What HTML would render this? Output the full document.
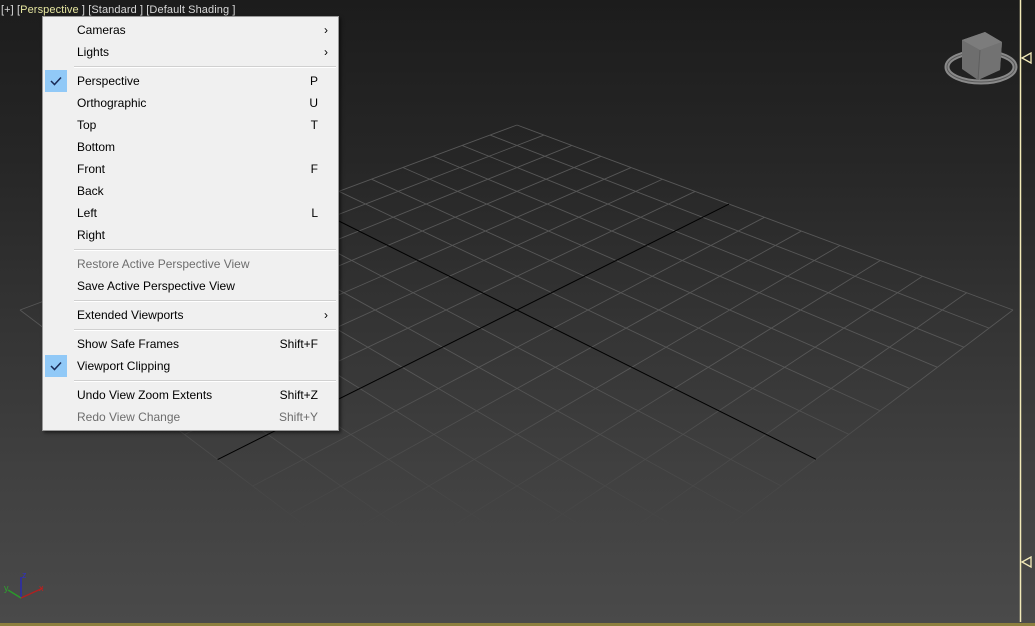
<!DOCTYPE html>
<html><head><meta charset="utf-8"><style>
html,body{margin:0;padding:0;width:1035px;height:626px;overflow:hidden;}
body{position:relative;background:linear-gradient(#1c1c1c 0%,#262626 25%,#333 50%,#404040 75%,#4a4a4a 100%);font-family:"Liberation Sans",sans-serif;}
svg{display:block;}
#hdr{position:absolute;left:1px;top:4px;font-size:11px;color:#d8d8d8;letter-spacing:0.1px;white-space:pre;}
#hdr .y{color:#e6e6a0;}
#menu{position:absolute;left:42px;top:16px;width:297px;height:415px;background:#f0f0f0;border:1px solid #999;box-sizing:border-box;box-shadow:2px 2px 3px rgba(0,0,0,0.5);font-size:12px;color:#000;}
.it{position:absolute;left:0;width:295px;height:22px;line-height:22px;}
.it .t{position:absolute;left:34px;}
.it .k{position:absolute;right:20px;}
.it .a{position:absolute;right:10px;font-size:12px;}
.dis{color:#6d6d6d;}
.sep{position:absolute;left:31px;width:262px;height:1px;background:#d0d0d0;border-bottom:1px solid #fff;}
.chk{position:absolute;left:2px;top:0;width:22px;height:22px;background:#91c9f7;}
</style></head><body>
<svg width="1035" height="626" style="position:absolute;left:0;top:0">
<defs><linearGradient id="fd" x1="0" y1="0" x2="0" y2="626" gradientUnits="userSpaceOnUse">
<stop offset="0" stop-color="#fff"/><stop offset="0.6" stop-color="#fff"/><stop offset="0.86" stop-color="#000"/></linearGradient>
<mask id="m"><rect width="1035" height="626" fill="url(#fd)"/></mask></defs>
<g id="grid" mask="url(#m)" stroke="#575757" stroke-width="0.9" fill="none"></g>
<g id="axes" stroke="#000" stroke-width="1"></g>
<line x1="1020.5" y1="0" x2="1020.5" y2="622" stroke="#f2eab8" stroke-width="1.5"/>
<polygon points="1022,58 1031,53 1031,63" fill="none" stroke="#f2eab8" stroke-width="1.3"/>
<polygon points="1022,562 1031,557 1031,567" fill="none" stroke="#f2eab8" stroke-width="1.3"/>
<rect x="0" y="623" width="1035" height="3" fill="#8c7f3e"/>
<ellipse cx="981" cy="67" rx="34" ry="15" fill="none" stroke="#8a8a8a" stroke-width="5"/>
<ellipse cx="981" cy="67" rx="34" ry="15" fill="none" stroke="#5a5a5a" stroke-width="1"/>
<polygon points="962,40 985,32 1002,42 1000,70 978,80 962,69" fill="#6e6e6e"/>
<polygon points="962,40 985,32 1002,42 980,50" fill="#7c7c7c"/>
<polygon points="980,50 1002,42 1000,70 978,80" fill="#727272"/>
<line x1="980" y1="50" x2="978" y2="80" stroke="#5e5e5e"/>
<line x1="21" y1="598" x2="21" y2="577" stroke="#2a2ab0" stroke-width="1.5"/>
<line x1="21" y1="598" x2="43" y2="588" stroke="#b02020" stroke-width="1.5"/>
<line x1="21" y1="598" x2="8" y2="590" stroke="#2a9a2a" stroke-width="1.5"/>
<text x="22" y="578" font-size="9" fill="#3030c0" font-family="Liberation Sans">z</text>
<text x="39" y="591" font-size="9" fill="#c02020" font-family="Liberation Sans">x</text>
<text x="4" y="591" font-size="9" fill="#30a030" font-family="Liberation Sans">y</text>
</svg>
<script>
(function(){
var P=[[517,125],[1013,310],[517,686],[20,310]];
function H(u,v){
 var x0=P[0][0],y0=P[0][1],x1=P[1][0],y1=P[1][1],x2=P[2][0],y2=P[2][1],x3=P[3][0],y3=P[3][1];
 var dx1=x1-x2,dx2=x3-x2,dy1=y1-y2,dy2=y3-y2,sx=x0-x1+x2-x3,sy=y0-y1+y2-y3;
 var den=dx1*dy2-dx2*dy1;
 var g=(sx*dy2-dx2*sy)/den,h=(dx1*sy-sx*dy1)/den;
 var a=x1-x0+g*x1,b=x3-x0+h*x3,c=x0,d=y1-y0+g*y1,e=y3-y0+h*y3,f=y0;
 var w=g*u+h*v+1;return [(a*u+b*v+c)/w,(d*u+e*v+f)/w];}
var N=14,s='',t='';
for(var i=0;i<=N;i++){var k=i/N;
 var a=H(k,0),b=H(k,1),c=H(0,k),d=H(1,k);
 var l1='<line x1="'+a[0]+'" y1="'+a[1]+'" x2="'+b[0]+'" y2="'+b[1]+'"/>';
 var l2='<line x1="'+c[0]+'" y1="'+c[1]+'" x2="'+d[0]+'" y2="'+d[1]+'"/>';
 if(i==7){t+=l1+l2;}else{s+=l1+l2;}}
document.getElementById('grid').innerHTML=s;
document.getElementById('axes').innerHTML=t;
})();
</script>
<div id="hdr">[+] [<span class="y">Perspective</span> ] [Standard ] [Default Shading ]</div>
<div id="menu">
<div class="it" style="top:2px"><span class="t">Cameras</span><span class="a">›</span></div>
<div class="it" style="top:24px"><span class="t">Lights</span><span class="a">›</span></div>
<div class="sep" style="top:49px"></div>
<div class="it" style="top:53px"><div class="chk"><svg width="22" height="22"><path d="M6 11 L9.5 14.5 L16 7.5" stroke="#1a2a55" stroke-width="1.5" fill="none"/></svg></div><span class="t">Perspective</span><span class="k">P</span></div>
<div class="it" style="top:75px"><span class="t">Orthographic</span><span class="k">U</span></div>
<div class="it" style="top:97px"><span class="t">Top</span><span class="k">T</span></div>
<div class="it" style="top:119px"><span class="t">Bottom</span></div>
<div class="it" style="top:141px"><span class="t">Front</span><span class="k">F</span></div>
<div class="it" style="top:163px"><span class="t">Back</span></div>
<div class="it" style="top:185px"><span class="t">Left</span><span class="k">L</span></div>
<div class="it" style="top:207px"><span class="t">Right</span></div>
<div class="sep" style="top:232px"></div>
<div class="it dis" style="top:236px"><span class="t">Restore Active Perspective View</span></div>
<div class="it" style="top:258px"><span class="t">Save Active Perspective View</span></div>
<div class="sep" style="top:283px"></div>
<div class="it" style="top:287px"><span class="t">Extended Viewports</span><span class="a">›</span></div>
<div class="sep" style="top:312px"></div>
<div class="it" style="top:316px"><span class="t">Show Safe Frames</span><span class="k">Shift+F</span></div>
<div class="it" style="top:338px"><div class="chk"><svg width="22" height="22"><path d="M6 11 L9.5 14.5 L16 7.5" stroke="#1a2a55" stroke-width="1.5" fill="none"/></svg></div><span class="t">Viewport Clipping</span></div>
<div class="sep" style="top:363px"></div>
<div class="it" style="top:367px"><span class="t">Undo View Zoom Extents</span><span class="k">Shift+Z</span></div>
<div class="it dis" style="top:389px"><span class="t">Redo View Change</span><span class="k">Shift+Y</span></div>
</div>
</body></html>
